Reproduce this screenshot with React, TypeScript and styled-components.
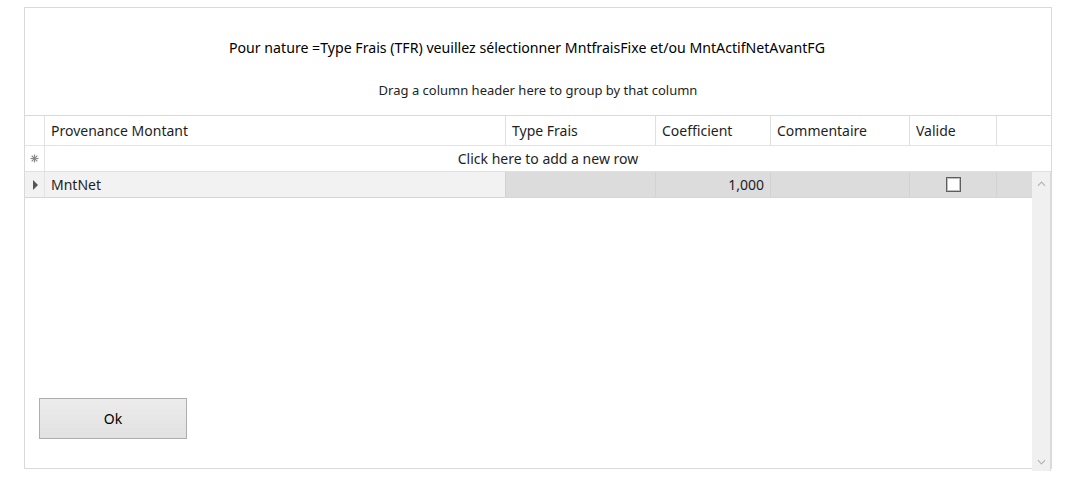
import styled, { createGlobalStyle } from 'styled-components';

const GlobalStyle = createGlobalStyle`
	html, body {
		margin: 0;
		padding: 0;
		background: #ffffff;
	}
	body {
		font-family: 'Noto Sans', 'Open Sans', sans-serif;
		color: #1e1e1e;
	}
`;

const columns = [
	{ title: 'Provenance Montant', width: 461 },
	{ title: 'Type Frais', width: 150 },
	{ title: 'Coefficient', width: 115 },
	{ title: 'Commentaire', width: 139 },
	{ title: 'Valide', width: 87 },
];

export default function App() {
	return (
		<>
			<GlobalStyle />
			<Page>
				<Frame>
					<Banner>
						<Title>Pour nature =Type Frais (TFR) veuillez sélectionner MntfraisFixe et/ou MntActifNetAvantFG</Title>
						<GroupPanel>Drag a column header here to group by that column</GroupPanel>
					</Banner>
					<HeaderRow>
						<Indicator />
						{columns.map((c) => (
							<HeaderCell key={c.title} style={{ width: c.width }}>
								{c.title}
							</HeaderCell>
						))}
						<HeaderFill />
					</HeaderRow>
					<AddRow>
						<Indicator>
							<StarIcon />
						</Indicator>
						<AddText>Click here to add a new row</AddText>
					</AddRow>
					<Body>
						<Rows>
							<DataRow>
								<Indicator $shade>
									<Arrow />
								</Indicator>
								<Cell $first style={{ width: columns[0].width }}>MntNet</Cell>
								<Cell style={{ width: columns[1].width }} />
								<Cell $right style={{ width: columns[2].width }}>1,000</Cell>
								<Cell style={{ width: columns[3].width }} />
								<Cell $center style={{ width: columns[4].width }}>
									<CheckBox />
								</Cell>
								<Cell $last />
							</DataRow>
							<Empty>
								<OkButton>Ok</OkButton>
							</Empty>
						</Rows>
						<ScrollBar>
							<Chevron viewBox="0 0 10 6">
								<path d="M1 5 L5 1 L9 5" />
							</Chevron>
							<Chevron viewBox="0 0 10 6">
								<path d="M1 1 L5 5 L9 1" />
							</Chevron>
						</ScrollBar>
					</Body>
				</Frame>
			</Page>
		</>
	);
}

function StarIcon() {
	return (
		<svg width="9" height="9" viewBox="0 0 9 9">
			<g stroke="#8a8a8a" strokeWidth="1.2">
				<line x1="4.5" y1="0.5" x2="4.5" y2="8.5" />
				<line x1="0.5" y1="4.5" x2="8.5" y2="4.5" />
				<line x1="1.7" y1="1.7" x2="7.3" y2="7.3" />
				<line x1="7.3" y1="1.7" x2="1.7" y2="7.3" />
			</g>
		</svg>
	);
}

const Page = styled.div`
	width: 1076px;
	height: 496px;
	padding: 7px 0 0 24px;
	box-sizing: border-box;
`;

const Frame = styled.div`
	width: 1028px;
	height: 462px;
	box-sizing: border-box;
	border: 1px solid #d9d9d9;
	border-bottom: none;
	display: flex;
	flex-direction: column;
`;

const Banner = styled.div`
	height: 108px;
	display: flex;
	flex-direction: column;
	align-items: center;
	border-bottom: 1px solid #d9d9d9;
	box-sizing: border-box;
`;

const Title = styled.div`
	margin-top: 30px;
	padding-right: 22px;
	font-size: 14.15px;
	line-height: 20px;
	color: #000;
`;

const GroupPanel = styled.div`
	margin-top: 23px;
	font-size: 13px;
	line-height: 18px;
	color: #1e1e1e;
`;

const HeaderRow = styled.div`
	display: flex;
	height: 30px;
	border-bottom: 1px solid #e3e3e3;
	box-sizing: border-box;
`;

const Indicator = styled.div<{ $shade?: boolean }>`
	width: 19px;
	flex-shrink: 0;
	border-right: 1px solid #e3e3e3;
	background: ${({ $shade }) => ($shade ? '#f2f2f2' : '#ffffff')};
	display: flex;
	align-items: center;
	justify-content: center;
`;

const HeaderCell = styled.div`
	flex-shrink: 0;
	box-sizing: border-box;
	border-right: 1px solid #e0e0e0;
	padding: 0 6px;
	font-size: 14px;
	line-height: 29px;
	white-space: nowrap;
	overflow: hidden;
`;

const HeaderFill = styled.div`
	flex: 1;
`;

const AddRow = styled.div`
	display: flex;
	height: 26px;
	border-bottom: 1px solid #e0e0e0;
	box-sizing: border-box;
`;

const AddText = styled.div`
	flex: 1;
	text-align: center;
	font-size: 14px;
	line-height: 25px;
`;

const Body = styled.div`
	flex: 1;
	display: flex;
	min-height: 0;
`;

const Rows = styled.div`
	flex: 1;
	display: flex;
	flex-direction: column;
	border-bottom: 1px solid #d9d9d9;
`;

const DataRow = styled.div`
	display: flex;
	height: 26px;
	border-bottom: 1px solid #d6d6d6;
	box-sizing: border-box;
`;

const Cell = styled.div<{ $first?: boolean; $right?: boolean; $center?: boolean; $last?: boolean }>`
	flex-shrink: 0;
	flex-grow: ${({ $last }) => ($last ? 1 : 0)};
	box-sizing: border-box;
	background: ${({ $first }) => ($first ? '#f2f2f2' : '#dcdcdc')};
	border-right: ${({ $last }) => ($last ? 'none' : '1px solid #d2d2d2')};
	padding: 0 6px;
	font-size: 14px;
	line-height: 25px;
	display: flex;
	align-items: center;
	justify-content: ${({ $right, $center }) => ($right ? 'flex-end' : $center ? 'center' : 'flex-start')};
`;

const Arrow = styled.div`
	width: 0;
	height: 0;
	border-top: 5px solid transparent;
	border-bottom: 5px solid transparent;
	border-left: 5px solid #555555;
	margin-left: 1px;
`;

const CheckBox = styled.div`
	width: 15px;
	height: 15px;
	box-sizing: border-box;
	border: 1px solid #5e5e5e;
	box-shadow: inset 0 0 0 1px #bdbdbd;
	background: #ffffff;
`;

const Empty = styled.div`
	flex: 1;
	display: flex;
	align-items: flex-end;
	padding: 0 0 29px 14px;
`;

const OkButton = styled.button`
	width: 148px;
	height: 41px;
	box-sizing: border-box;
	border: 1px solid #adadad;
	background: linear-gradient(#ececec, #e1e1e1);
	font-family: 'Noto Sans', 'Open Sans', sans-serif;
	font-size: 14px;
	color: #000;
	padding: 0;
`;

const ScrollBar = styled.div`
	width: 19px;
	background: #f0f0f0;
	border-right: 1px solid #dadada;
	margin-bottom: -2px;
	display: flex;
	flex-direction: column;
	justify-content: space-between;
	align-items: center;
	padding: 9px 0 6px;
	box-sizing: border-box;
`;

const Chevron = styled.svg`
	width: 9px;
	height: 6px;
	fill: none;
	stroke: #b4b4b4;
	stroke-width: 1.3;
`;
